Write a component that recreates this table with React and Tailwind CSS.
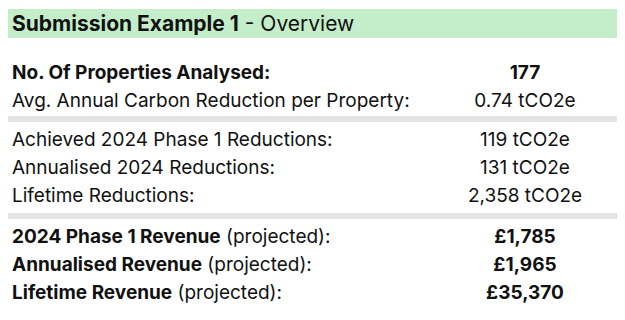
const rowsA = [
  { label: <b className="font-bold">No. Of Properties Analysed:</b>, value: <b className="font-bold">177</b> },
  { label: 'Avg. Annual Carbon Reduction per Property:', value: '0.74 tCO2e' },
];
const rowsB = [
  { label: 'Achieved 2024 Phase 1 Reductions:', value: '119 tCO2e' },
  { label: 'Annualised 2024 Reductions:', value: '131 tCO2e' },
  { label: 'Lifetime Reductions:', value: '2,358 tCO2e' },
];
const rowsC = [
  { bold: '2024 Phase 1 Revenue', value: '£1,785' },
  { bold: 'Annualised Revenue', value: '£1,965' },
  { bold: 'Lifetime Revenue', value: '£35,370' },
];

function Row({ label, value }) {
  return (
    <div className="flex items-center h-[28px]">
      <div className="flex-1 pl-1 whitespace-nowrap">{label}</div>
      <div className="w-[184px] text-center whitespace-nowrap">{value}</div>
    </div>
  );
}

export default function App() {
  return (
    <div className="w-[625px] h-[320px] bg-white px-2 pt-[9px] text-[#111] text-[19px]"
      style={{ fontFamily: 'Inter, "Open Sans", sans-serif' }}>
      <div className="h-[29px] bg-[#c3eec9] flex items-center pl-1 text-[21px]">
        <span className="font-bold">Submission Example 1</span>
        <span className="ml-1.5">- Overview</span>
      </div>

      <div className="mt-[21px]">
        {rowsA.map((r, i) => <Row key={i} {...r} />)}
      </div>
      <div className="mt-[1px] h-[6px] bg-[#e3e3e3]" />

      <div className="mt-1">
        {rowsB.map((r, i) => <Row key={i} {...r} />)}
      </div>
      <div className="mt-[3px] h-[6px] bg-[#e3e3e3]" />

      <div className="mt-1">
        {rowsC.map((r, i) => (
          <Row key={i}
            label={<><b className="font-bold">{r.bold}</b> (projected):</>}
            value={<b className="font-bold">{r.value}</b>} />
        ))}
      </div>
    </div>
  );
}
